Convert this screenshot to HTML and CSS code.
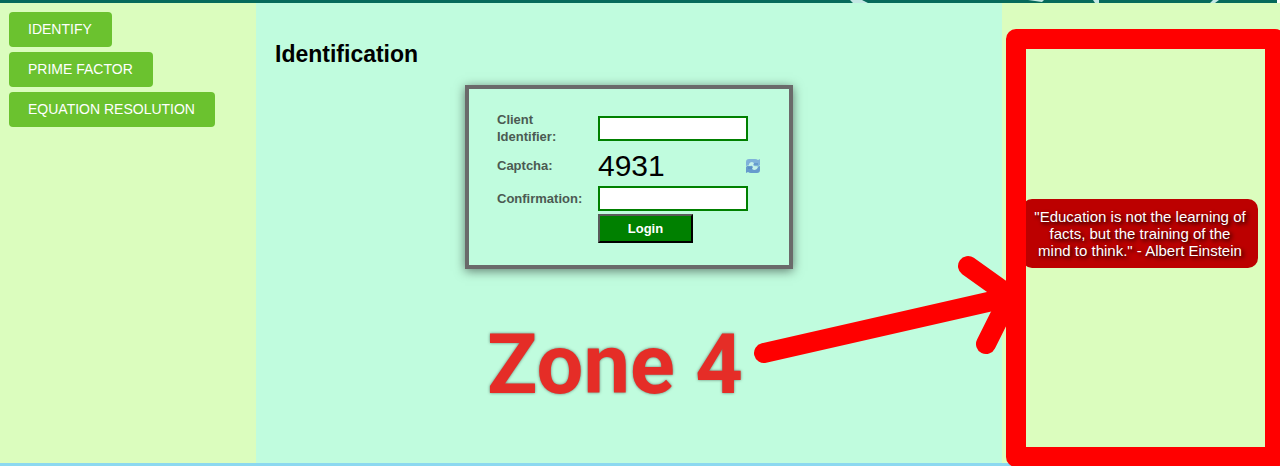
FILE: index.html
```html
<!DOCTYPE html>
<html lang="en">
<head>
    <meta charset="UTF-8">
    <meta name="viewport" content="width=device-width, initial-scale=1.0">
    <title>Identification</title>
    <link rel="stylesheet" href="styles.css">
</head>
<body>

    <header class="banner">
        <svg class="banner-marks" width="450" height="3" viewBox="830 0 450 3" aria-hidden="true">
            <path d="M850 0h12l6 3h-15zM1028 0h16l-2 2zM1093 0h6v3h-4zM1213 0h6l-4 3h-5z" fill="#c4e8e4"/>
            <path d="M1277 0h3v3h-3z" fill="#ffffff"/>
        </svg>
    </header>

    <div class="page">
        <nav class="menu">
            <a class="menu-link" href="#identify">IDENTIFY</a>
            <a class="menu-link" href="#prime">PRIME FACTOR</a>
            <a class="menu-link" href="#equation">EQUATION RESOLUTION</a>
        </nav>

        <main class="content">
            <h1 class="title">Identification</h1>

            <form class="login-form">
                <label class="form-label" for="client">Client Identifier:</label>
                <input class="form-input" type="text" id="client">

                <span class="form-label">Captcha:</span>
                <div class="captcha">
                    <span class="captcha-code">4931</span>
                    <button class="refresh" type="button" aria-label="Refresh captcha">
                        <svg width="16" height="16" viewBox="0 0 16 16">
                            <path d="M1 8V4q0-3 3-3h6q2 0 3 1l2-1v6l-1 1H8L5 7z" fill="#7fb2da"/>
                            <path d="M15 8v4q0 3-3 3H6q-2 0-3-1l-2 1V9l1-1h6l3 1z" fill="#669bcd"/>
                            <path d="M4 8V6q1-2 3-2l2 1-1 2 3 2h2q-1 3-4 3l-2-1 1-2-2-2z" fill="#c6f2ea"/>
                            <path d="M9 6h4M3 10h4" stroke="#4f86c0" fill="none"/>
                        </svg>
                    </button>
                </div>

                <label class="form-label" for="confirmation">Confirmation:</label>
                <input class="form-input" type="text" id="confirmation">

                <button class="login-button" type="submit">Login</button>
            </form>
        </main>

        <aside class="sidebar">
            <blockquote class="quote">"Education is not the learning of facts, but the training of the mind to think." - Albert Einstein</blockquote>
        </aside>
    </div>

    <footer class="footer"></footer>

    <!-- Zone marker drawn over the page -->
    <div class="zone">
        <span class="zone-name">Zone 4</span>
        <svg class="zone-frame" width="530" height="466" viewBox="750 0 530 466" aria-hidden="true">
            <g fill="none" stroke="#ff0000" stroke-width="20" stroke-linecap="round" stroke-linejoin="round">
                <rect x="1016" y="39" width="259" height="418"/>
                <path d="M764 353L1010 297"/>
                <path d="M968 266L1010 296L986 344"/>
            </g>
        </svg>
    </div>

</body>
</html>
```
FILE: styles.css
```css
* {
    box-sizing: border-box;
}

body {
    margin: 0;
    min-height: 100vh;
    display: flex;
    flex-direction: column;
    position: relative;
    font-family: "Liberation Sans", Arial, sans-serif;
    color: #000;
    background-color: #dbfdbe;
}

.banner {
    height: 3px;
    display: flex;
    justify-content: flex-end;
    background-color: #066a5b;
}

.page {
    flex: 1;
    display: grid;
    grid-template-columns: 20% 1fr 278px;
}

/* Left menu */
.menu {
    display: flex;
    flex-direction: column;
    align-items: flex-start;
    gap: 5px;
    padding: 9px;
}

.menu-link {
    padding: 0 20px 0 19px;
    font-size: 14px;
    line-height: 35px;
    color: #fff;
    text-decoration: none;
    background-color: #6bc22f;
    border-radius: 4px;
}

/* Middle column */
.content {
    padding: 38px 19px;
    background-color: #c0fcde;
}

.title {
    margin: 0 0 18px;
    font-size: 23px;
    line-height: 26px;
}

.login-form {
    width: 328px;
    margin: 0 auto;
    padding: 22px 28px;
    display: grid;
    grid-template-columns: 93px 1fr;
    column-gap: 8px;
    row-gap: 3px;
    align-items: center;
    border: 4px solid #6a6a6a;
    box-shadow: 0 2px 10px rgba(0, 0, 0, 0.5);
}

.form-label {
    font-size: 13px;
    font-weight: bold;
    line-height: 17px;
    color: #4b5a52;
}

.form-input {
    width: 150px;
    height: 25px;
    padding: 2px 4px;
    font-size: 13px;
    background-color: #fff;
    border: 2px solid #008000;
}

.captcha {
    display: flex;
    align-items: center;
    justify-content: space-between;
}

.captcha-code {
    font-size: 30px;
    line-height: 35px;
}

.refresh {
    display: flex;
    padding: 0;
    border: 0;
    background: none;
    cursor: pointer;
}

.login-button {
    grid-column: 2;
    justify-self: start;
    width: 95px;
    height: 29px;
    font-family: inherit;
    font-size: 13px;
    font-weight: bold;
    color: #fff;
    background-color: #008000;
    border: 2px solid;
    border-color: #5a5a5a #000 #000 #5a5a5a;
    cursor: pointer;
}

/* Right column */
.sidebar {
    display: flex;
    align-items: center;
    justify-content: center;
    padding: 0 22px 0 20px;
}

.quote {
    margin: 0;
    padding: 9px 10px;
    font-size: 15px;
    line-height: 17px;
    text-align: center;
    color: #fff;
    text-shadow: 2px 2px 4px #000;
    background-color: #bc0000;
    border-radius: 10px;
}

.footer {
    height: 3px;
    background-color: #8cd8f0;
}

/* Zone marker */
.zone {
    position: absolute;
    top: 0;
    right: 0;
    pointer-events: none;
}

.zone-frame {
    display: block;
}

.zone-name {
    position: absolute;
    top: 315px;
    right: 537px;
    font-family: Roboto, sans-serif;
    font-size: 83px;
    font-weight: bold;
    line-height: 100px;
    white-space: nowrap;
    color: #e52d27;
    text-shadow: 0 0 3px rgba(0, 0, 0, 0.5);
}
```
